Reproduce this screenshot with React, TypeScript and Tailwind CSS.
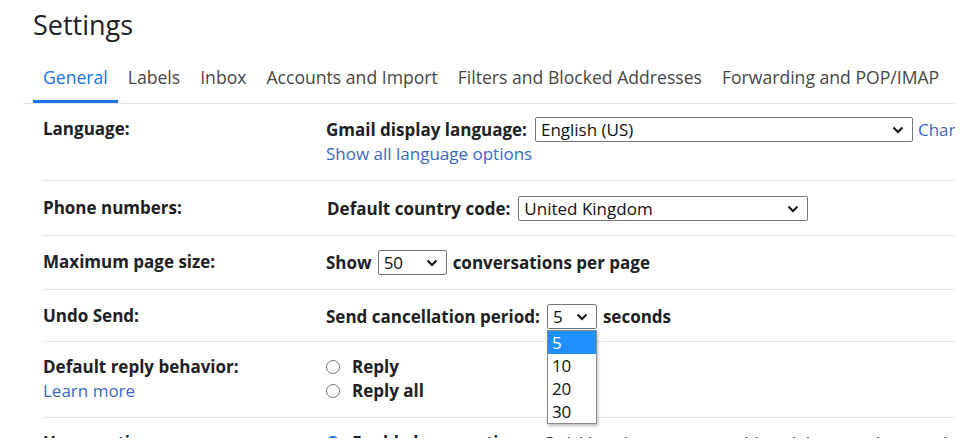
import { ReactNode } from "react";

const tabs = [
  "General",
  "Labels",
  "Inbox",
  "Accounts and Import",
  "Filters and Blocked Addresses",
  "Forwarding and POP/IMAP",
];

function Chevron() {
  return (
    <svg width="12" height="8" viewBox="0 0 12 8" className="shrink-0">
      <path d="M1.5 1.5 L6 6 L10.5 1.5" fill="none" stroke="#111" strokeWidth="2" />
    </svg>
  );
}

function FakeSelect({ value, width }: { value: string; width: string }) {
  return (
    <div
      className={`flex h-[25px] ${width} items-center justify-between rounded-[2px] border border-[#767676] bg-white pl-[5px] pr-[8px] font-normal leading-[23px] text-[#111]`}
    >
      <span>{value}</span>
      <Chevron />
    </div>
  );
}

function Radio({ checked = false }: { checked?: boolean }) {
  return (
    <span
      className={`inline-block h-[14px] w-[14px] shrink-0 rounded-full border ${
        checked ? "border-[#1a73e8] bg-[#1a73e8]" : "border-[#767676] bg-white"
      }`}
    />
  );
}

function Row({
  label,
  children,
  extra,
  pad = "pt-[14px] pb-[14px]",
}: {
  label: string;
  children: ReactNode;
  extra?: ReactNode;
  pad?: string;
}) {
  return (
    <div className={`flex border-b border-[#e4e4e4] leading-[24px] ${pad}`}>
      <div className="w-[284px] shrink-0 pl-[1px]">
        <div className="font-bold text-[#202124]">{label}</div>
        {extra}
      </div>
      <div className="flex-1 font-bold text-[#202124]">{children}</div>
    </div>
  );
}

export default function App() {
  return (
    <div
      className="h-[448px] w-full bg-white text-[17px]"
      style={{ fontFamily: '"Open Sans", Roboto, Arial, sans-serif' }}
    >
      <div className="h-[438px] w-[955px] overflow-hidden pl-[23px]">
        <h1 className="pl-[10px] pt-[7px] text-[27px] leading-[36px] font-normal text-[#202124]">
          Settings
        </h1>

        <div className="mt-[21px] flex border-b border-[#e4e4e4] pl-[10px] text-[17.6px]">
          {tabs.map((t, i) => (
            <div
              key={t}
              className={`whitespace-nowrap px-[10px] pb-[10px] leading-[26px] ${
                i === 0
                  ? "border-b-[3px] border-[#1a73e8] text-[#1a73e8]"
                  : "border-b-[3px] border-transparent text-[#474747]"
              }`}
            >
              {t}
            </div>
          ))}
        </div>

        <div className="ml-[19px]">
          <Row label="Language:" pad="pt-[13px] pb-[14px]">
            <div className="flex h-[25px] items-center whitespace-nowrap">
              <span className="pr-[8px]">Gmail display language:</span>
              <FakeSelect value="English (US)" width="w-[378px]" />
              <span className="pl-[5px] font-normal text-[#3b67c4]">
                Change language settings for other Google products
              </span>
            </div>
            <div className="font-normal text-[#3b67c4]">Show all language options</div>
          </Row>

          <Row label="Phone numbers:" pad="pt-[15px] pb-[14px]">
            <div className="flex h-[25px] items-center whitespace-nowrap pl-[1px]">
              <span className="pr-[8px]">Default country code:</span>
              <FakeSelect value="United Kingdom" width="w-[290px]" />
            </div>
          </Row>

          <Row label="Maximum page size:" pad="pt-[14px] pb-[14px]">
            <div className="flex h-[25px] items-center whitespace-nowrap">
              <span className="pr-[6px]">Show</span>
              <FakeSelect value="50" width="w-[69px]" />
              <span className="pl-[6px]">conversations per page</span>
            </div>
          </Row>

          <Row label="Undo Send:" pad="pt-[14px] pb-[12px]">
            <div className="flex h-[25px] items-center whitespace-nowrap">
              <span className="pr-[7px]">Send cancellation period:</span>
              <div className="relative">
                <FakeSelect value="5" width="w-[50px]" />
                <div className="absolute left-0 top-[26px] z-10 w-[50px] border border-[#8a8a8a] bg-white text-[17px] font-normal leading-[23px] text-[#111] shadow-[1px_2px_3px_rgba(0,0,0,0.25)]">
                  <div className="bg-[#1e90ff] pl-[4px] text-white">5</div>
                  <div className="pl-[4px]">10</div>
                  <div className="pl-[4px]">20</div>
                  <div className="pl-[4px]">30</div>
                </div>
              </div>
              <span className="pl-[6px]">seconds</span>
            </div>
          </Row>

          <Row
            label="Default reply behavior:"
            pad="pt-[13px] pb-[14px]"
            extra={<div className="font-normal text-[#3b67c4]">Learn more</div>}
          >
            <div className="flex items-center gap-[12px]">
              <Radio />
              <span>Reply</span>
            </div>
            <div className="flex items-center gap-[12px]">
              <Radio />
              <span>Reply all</span>
            </div>
          </Row>

          <Row label="Hover actions:" pad="pt-[13px] pb-[14px]">
            <div className="flex items-center gap-[12px] whitespace-nowrap">
              <Radio checked />
              <span>
                Enable hover actions{" "}
                <span className="font-normal">
                  - Quickly gain access to archive, delete, mark as read, and snooze controls on hover.
                </span>
              </span>
            </div>
          </Row>
        </div>
      </div>
    </div>
  );
}
